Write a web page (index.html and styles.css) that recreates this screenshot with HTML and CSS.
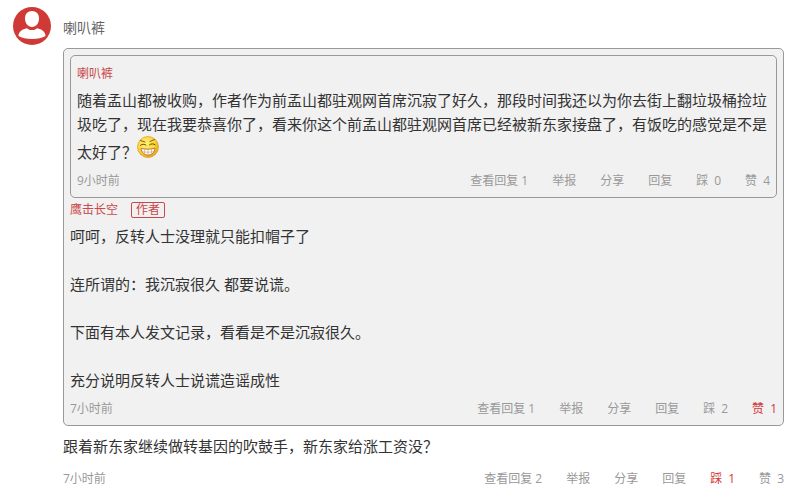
FILE: index.html
```html
<!DOCTYPE html>
<html lang="zh-CN">
<head>
  <meta charset="UTF-8">
  <meta name="viewport" content="width=device-width, initial-scale=1.0">
  <title>评论</title>
  <link rel="stylesheet" href="styles.css">
</head>
<body>
  <div class="comment">
    <a class="avatar" href="#" aria-label="喇叭裤">
      <svg width="38" height="38" viewBox="0 0 38 38">
        <circle cx="19" cy="19" r="19" fill="#cf3a37"/>
        <path d="M19 4c4.200 0 7 3 7 7.200 0 4.800-2.800 8.800-7 8.800s-7-4-7-8.800C12 7 14.800 4 19 4z" fill="#fff"/>
        <path d="M5.500 29c0-4 3.500-7 8.500-7.800 1.300 1.300 3 1.900 5 1.900s3.700-.6 5-1.900c5 .8 8.500 3.800 8.500 7.800-3 2-8 3-13.500 3s-10.500-1-13.500-3z" fill="#fff"/>
      </svg>
    </a>
    <div class="comment-main">
      <a class="user-name" href="#">喇叭裤</a>
      <div class="quote">
        <div class="quote">
          <div class="quote-head">
            <a class="quote-name" href="#">喇叭裤</a>
          </div>
          <p class="text">随着孟山都被收购，作者作为前孟山都驻观网首席沉寂了好久，那段时间我还以为你去街上翻垃圾桶捡垃圾吃了，现在我要恭喜你了，看来你这个前孟山都驻观网首席已经被新东家接盘了，有饭吃的感觉是不是太好了？<svg class="emoji" width="22" height="22" viewBox="0 0 22 22">
            <defs>
              <radialGradient id="face" cx="40%" cy="35%" r="65%">
                <stop offset="0" stop-color="#fff27a"/>
                <stop offset="0.6" stop-color="#fbd83c"/>
                <stop offset="1" stop-color="#e9a81c"/>
              </radialGradient>
            </defs>
            <circle cx="11" cy="11" r="10.500" fill="url(#face)" stroke="#dc9c1e" stroke-width="0.700"/>
            <path d="M3.500 4.500l4.500 1.500M17.500 3.500L13 5.500" stroke="#8a5a18" stroke-width="1" fill="none" stroke-linecap="round"/>
            <path d="M3.500 9.300c1.500-1.400 4-1.400 5.500-.2M12.500 8.900c1.500-1.400 4-1.400 5.500-.2" stroke="#6b4310" stroke-width="1" fill="none" stroke-linecap="round"/>
            <path d="M4 12.500c4.500.9 9.500.9 14-.2-.4 4-3 6.700-6.700 6.700-4 0-6.800-2.500-7.300-6.500z" fill="#fff" stroke="#a3602a" stroke-width="0.800"/>
            <path d="M5 15.700c4 .7 8 .7 12-.2M7.500 13v4.700M11 13.200v5.600M14.500 13v4.700" stroke="#c99468" stroke-width="0.600" fill="none"/>
          </svg></p>
          <div class="meta">
            <span class="time">9小时前</span>
            <div class="actions">
              <button type="button">查看回复 1</button>
              <button type="button">举报</button>
              <button type="button">分享</button>
              <button type="button">回复</button>
              <button type="button">踩<span class="count">0</span></button>
              <button type="button">赞<span class="count">4</span></button>
            </div>
          </div>
        </div>
        <div class="quote-head">
          <a class="quote-name" href="#">鹰击长空</a>
          <span class="author-tag">作者</span>
        </div>
        <p class="text">呵呵，反转人士没理就只能扣帽子了<br><br>连所谓的：我沉寂很久 都要说谎。<br><br>下面有本人发文记录，看看是不是沉寂很久。<br><br>充分说明反转人士说谎造谣成性</p>
        <div class="meta">
          <span class="time">7小时前</span>
          <div class="actions">
            <button type="button">查看回复 1</button>
            <button type="button">举报</button>
            <button type="button">分享</button>
            <button type="button">回复</button>
            <button type="button">踩<span class="count">2</span></button>
            <button type="button" class="active">赞<span class="count">1</span></button>
          </div>
        </div>
      </div>
      <p class="text comment-text">跟着新东家继续做转基因的吹鼓手，新东家给涨工资没？</p>
      <div class="meta comment-meta">
        <span class="time">7小时前</span>
        <div class="actions">
          <button type="button">查看回复 2</button>
          <button type="button">举报</button>
          <button type="button">分享</button>
          <button type="button">回复</button>
          <button type="button" class="active">踩<span class="count">1</span></button>
          <button type="button">赞<span class="count">3</span></button>
        </div>
      </div>
    </div>
  </div>
</body>
</html>
```

FILE: styles.css
```css
* {
  box-sizing: border-box;
}
body {
  margin: 0;
  background: #fff;
  color: #333;
  font-family: "Open Sans", "Noto Sans CJK SC", sans-serif;
  font-size: 12px;
}
a {
  text-decoration: none;
}
.comment {
  display: flex;
  gap: 12px;
  padding: 7px 19px 10px 13px;
}
.avatar {
  flex: none;
  width: 38px;
  height: 38px;
}
.avatar svg {
  display: block;
}
.comment-main {
  flex: 1;
  min-width: 0;
}
.user-name {
  display: block;
  padding-top: 10px;
  height: 41px;
  color: #666;
  font-size: 14px;
  line-height: 22px;
}
.quote {
  padding: 6px;
  background: #f1f1f1;
  border: 1px solid #999;
  border-radius: 5px;
}
.quote-head {
  display: flex;
  align-items: center;
  gap: 13px;
  height: 24px;
}
.quote-name {
  color: #c9484a;
  line-height: 24px;
}
.author-tag {
  padding: 0 4px;
  border: 1px solid #c9484a;
  border-radius: 2px;
  color: #c9484a;
  line-height: 14px;
}
.text {
  margin: 2px 0 0;
  font-size: 15px;
  line-height: 24px;
}
.emoji {
  vertical-align: 0;
}
.meta {
  display: flex;
  justify-content: space-between;
  margin-top: 7px;
  color: #999;
  line-height: 20px;
}
.actions {
  display: flex;
  gap: 24px;
}
.actions button {
  padding: 0;
  border: none;
  background: none;
  color: inherit;
  font: inherit;
  line-height: 20px;
  cursor: pointer;
}
.actions .active {
  color: #cf3a37;
}
.count {
  margin-left: 6px;
}
.comment-text {
  margin-top: 8px;
}
.comment-meta {
  margin-top: 11px;
}
```
